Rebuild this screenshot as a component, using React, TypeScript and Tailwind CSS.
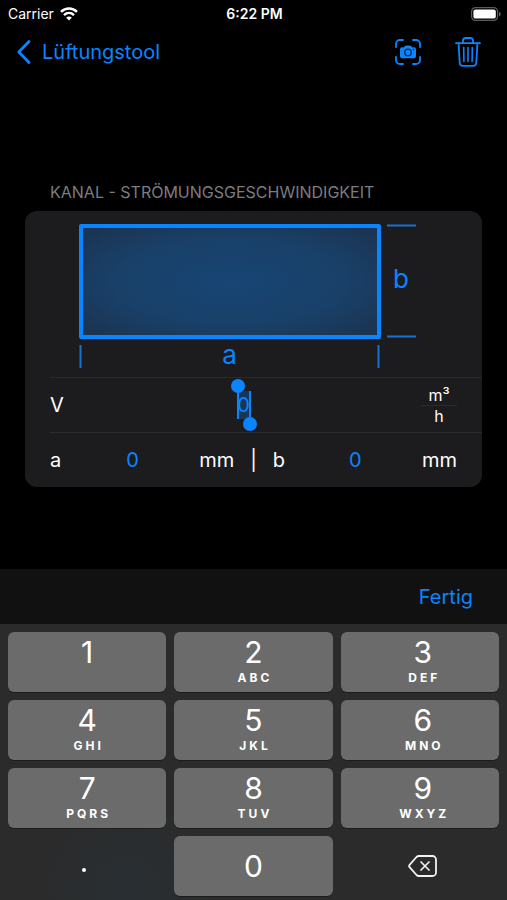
import { useState } from "react";

const KEYS = [
  { digit: "1", letters: "" },
  { digit: "2", letters: "ABC" },
  { digit: "3", letters: "DEF" },
  { digit: "4", letters: "GHI" },
  { digit: "5", letters: "JKL" },
  { digit: "6", letters: "MNO" },
  { digit: "7", letters: "PQRS" },
  { digit: "8", letters: "TUV" },
  { digit: "9", letters: "WXYZ" },
];

function WifiIcon() {
  return (
    <svg width="18" height="14" viewBox="0 0 18 14" fill="none" stroke="white" aria-hidden="true">
      <path d="M1 4.9C5.6.5 12.4.5 17 4.9" strokeWidth="2.5" />
      <path d="M4 8.1c2.9-2.8 7.1-2.8 10 0" strokeWidth="2.4" />
      <path d="M9 13.6 6.2 10.7c1.6-1.5 4-1.5 5.6 0Z" fill="white" stroke="none" />
    </svg>
  );
}

function BatteryIcon() {
  return (
    <svg width="30" height="14" viewBox="0 0 30 14" fill="none" aria-hidden="true">
      <rect x="0.6" y="0.6" width="26" height="12.8" rx="4" stroke="#5c5c5e" strokeWidth="1.2" />
      <rect x="2.4" y="2.4" width="22.4" height="9.2" rx="2.2" fill="white" />
      <path d="M28 4.7c1.2.4 1.8 1.3 1.8 2.3s-.6 1.9-1.8 2.3Z" fill="#5c5c5e" />
    </svg>
  );
}

function BackIcon() {
  return (
    <svg width="16" height="26" viewBox="0 0 16 26" fill="none" stroke="#0a84ff" strokeWidth="2.8" strokeLinecap="round" strokeLinejoin="round" aria-hidden="true">
      <path d="M13 2.6 2.8 13 13 23.4" />
    </svg>
  );
}

function CameraIcon() {
  return (
    <svg width="26" height="26" viewBox="0 0 26 26" fill="none" aria-hidden="true">
      <path
        d="M1 8V5a4 4 0 0 1 4-4h3M18 1h3a4 4 0 0 1 4 4v3M25 18v3a4 4 0 0 1-4 4h-3M8 25H5a4 4 0 0 1-4-4v-3"
        stroke="#0a84ff"
        strokeWidth="1.8"
        strokeLinecap="round"
      />
      <path
        d="M7 8.2h2l1-1.2q.4-.5 1-.5h4q.6 0 1 .5l1 1.2h2A2 2 0 0 1 21 10.2v7a2 2 0 0 1-2 2H7a2 2 0 0 1-2-2v-7a2 2 0 0 1 2-2Z"
        fill="#0a84ff"
      />
      <circle cx="13" cy="13.4" r="3.3" stroke="#06264a" strokeWidth="1.3" />
      <circle cx="18.5" cy="10.6" r="0.8" fill="#06264a" />
    </svg>
  );
}

function TrashIcon() {
  return (
    <svg width="26" height="30" viewBox="0 0 26 30" fill="none" stroke="#0a84ff" strokeWidth="1.8" strokeLinecap="round" strokeLinejoin="round" aria-hidden="true">
      <path d="M1 6.2h24" />
      <path d="M8 6V3.8A2.800 2.800 0 0 1 10.800 1h4.400A2.800 2.800 0 0 1 18 3.800V6" />
      <path d="M3.600 6.400 4.700 26a3 3 0 0 0 3 2.800h10.600a3 3 0 0 0 3-2.800l1.100-19.600" />
      <path d="M8.700 10.500l.2 14M13 10.500v14M17.300 10.500l-.2 14" strokeWidth="1.6" />
    </svg>
  );
}

function DeleteIcon() {
  return (
    <svg width="29" height="22" viewBox="0 0 29 22" fill="none" stroke="#f2f2f2" strokeLinecap="round" strokeLinejoin="round" aria-hidden="true">
      <path d="M11 1h13.500A3.500 3.500 0 0 1 28 4.500v13a3.500 3.500 0 0 1-3.500 3.500H11q-1.500 0-2.500-1L1.600 12.200q-1-1.200 0-2.400L8.500 2Q9.500 1 11 1Z" strokeWidth="1.8" />
      <path d="m13 7 8 8M21 7l-8 8" strokeWidth="1.7" />
    </svg>
  );
}

function DuctDiagram() {
  return (
    <svg width="338" height="154" viewBox="0 0 338 154" fill="none" role="img" aria-label="Kanal a × b">
      <defs>
        <radialGradient id="duct" cx="0.5" cy="0.5" r="0.65">
          <stop offset="0" stopColor="#174575" />
          <stop offset="0.6" stopColor="#194068" />
          <stop offset="1" stopColor="#1b3452" />
        </radialGradient>
      </defs>
      <rect x="2" y="3" width="298" height="111" fill="url(#duct)" stroke="#0a84ff" strokeWidth="4" strokeLinejoin="round" />
      <path d="M308 2.500h29M308 113.500h29M1.500 122v23M299.500 122v23" stroke="#1672d2" strokeWidth="2" />
      <text x="150.500" y="141" fontSize="26" textAnchor="middle" fill="#0a84ff">a</text>
      <text x="322" y="65" fontSize="26" textAnchor="middle" fill="#0a84ff">b</text>
    </svg>
  );
}

export default function App() {
  const [flow, setFlow] = useState("0");
  const [a, setA] = useState("0");
  const [b, setB] = useState("0");

  return (
    <div className="flex min-h-screen flex-col bg-black font-[Inter,'Liberation_Sans',sans-serif] text-white">
      <div className="grid h-7 grid-cols-3 items-center pr-1.5 pl-2 text-sm">
        <div className="flex items-center gap-1.5">
          <span>Carrier</span>
          <WifiIcon />
        </div>
        <span className="text-center font-semibold">6:22 PM</span>
        <div className="flex justify-end">
          <BatteryIcon />
        </div>
      </div>

      <header className="flex h-12 items-center justify-between pr-[26px] pl-4 text-[#0a84ff]">
        <a href="#" className="flex items-center gap-2.5 text-xl">
          <BackIcon />
          Lüftungstool
        </a>
        <div className="flex items-center gap-[34px]">
          <button type="button" aria-label="Foto aufnehmen">
            <CameraIcon />
          </button>
          <button type="button" aria-label="Löschen">
            <TrashIcon />
          </button>
        </div>
      </header>

      <main className="px-[25px] pt-26">
        <h1 className="px-[25px] text-base text-[#7c7c80]">KANAL - STRÖMUNGSGESCHWINDIGKEIT</h1>
        <section className="mt-[7px] rounded-xl bg-[#1c1c1e] text-xl">
          <div className="flex justify-center pt-3 pr-3">
            <DuctDiagram />
          </div>
          <div className="ml-[25px] flex h-14 items-center border-y border-[#2b2b2d] pr-[25px]">
            <label htmlFor="flow" className="w-4">V</label>
            <div className="relative min-w-0 flex-1">
              <input
                id="flow"
                inputMode="decimal"
                value={flow}
                onChange={(e) => setFlow(e.target.value)}
                className="block w-full bg-transparent text-center text-[#0a84ff] outline-none"
              />
              <div className="pointer-events-none absolute inset-y-0 left-1/2 w-3.5 -translate-x-1/2 border-x-2 border-[#0a84ff] bg-[#0a84ff]/25">
                <span className="absolute -top-3 -left-2 size-3.5 rounded-full bg-[#0a84ff]" />
                <span className="absolute -right-2 -bottom-3 size-3.5 rounded-full bg-[#0a84ff]" />
              </div>
            </div>
            <div className="flex w-9 flex-col text-center text-base leading-5">
              <span className="border-b border-[#2b2b2d]">m³</span>
              <span>h</span>
            </div>
          </div>
          <div className="flex h-[54px] items-center px-[25px]">
            <label htmlFor="side-a" className="w-4">a</label>
            <input
              id="side-a"
              inputMode="decimal"
              value={a}
              onChange={(e) => setA(e.target.value)}
              className="w-0 min-w-0 flex-1 bg-transparent text-center text-[#0a84ff] outline-none"
            />
            <span>mm</span>
            <span className="px-4">|</span>
            <label htmlFor="side-b" className="w-4">b</label>
            <input
              id="side-b"
              inputMode="decimal"
              value={b}
              onChange={(e) => setB(e.target.value)}
              className="w-0 min-w-0 flex-1 bg-transparent text-center text-[#0a84ff] outline-none"
            />
            <span>mm</span>
          </div>
        </section>
      </main>

      <div className="mt-auto">
        <div className="flex h-[55px] items-center justify-end bg-[#111111] px-[34px]">
          <button type="button" className="text-xl text-[#0a84ff]">Fertig</button>
        </div>
        <div className="grid auto-rows-[60px] grid-cols-3 gap-2 bg-[#2b2b2b] bg-[radial-gradient(circle_at_25%_96%,#282f33_0,#2b2b2b_90px)] px-2 pt-2 pb-1">
          {KEYS.map((key) => (
            <button
              key={key.digit}
              type="button"
              className="flex flex-col items-center gap-0.5 rounded-md bg-[#6b6b6b] pt-0.5 shadow-[0_1px_0_#1c1c1c] nth-[3n]:pl-1.5"
            >
              <span className="text-[30px] leading-9">{key.digit}</span>
              <span className="pl-[3px] text-xs leading-3 font-bold tracking-[3px]">{key.letters}</span>
            </button>
          ))}
          <button type="button" aria-label="Komma" className="flex items-center justify-center pt-2 pr-1.5">
            <span className="size-1 rounded-full bg-white" />
          </button>
          <button type="button" className="rounded-md bg-[#6b6b6b] text-[30px] shadow-[0_1px_0_#1c1c1c]">0</button>
          <button type="button" aria-label="Zeichen löschen" className="flex items-center justify-center pl-1.5">
            <DeleteIcon />
          </button>
        </div>
      </div>
    </div>
  );
}
